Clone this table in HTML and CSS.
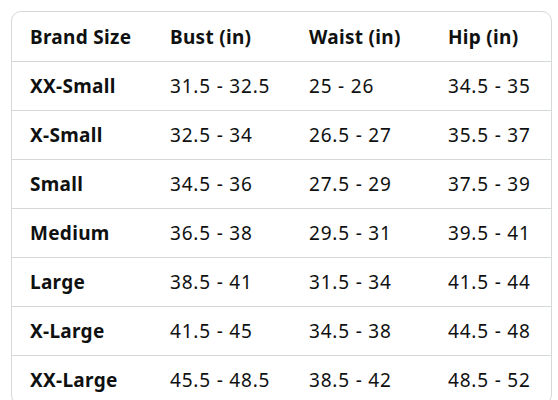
FILE: index.html
```html
<!DOCTYPE html>
<html>
<head>
<meta charset="utf-8">
<link rel="stylesheet" href="styles.css">
</head>
<body>
<div class="card">
  <div class="row head">
    <div class="cell">Brand Size</div><div class="cell">Bust (in)</div><div class="cell">Waist (in)</div><div class="cell">Hip (in)</div>
  </div>
  <div class="row"><div class="cell b">XX-Small</div><div class="cell">31.5 - 32.5</div><div class="cell">25 - 26</div><div class="cell">34.5 - 35</div></div>
  <div class="row"><div class="cell b">X-Small</div><div class="cell">32.5 - 34</div><div class="cell">26.5 - 27</div><div class="cell">35.5 - 37</div></div>
  <div class="row"><div class="cell b">Small</div><div class="cell">34.5 - 36</div><div class="cell">27.5 - 29</div><div class="cell">37.5 - 39</div></div>
  <div class="row"><div class="cell b">Medium</div><div class="cell">36.5 - 38</div><div class="cell">29.5 - 31</div><div class="cell">39.5 - 41</div></div>
  <div class="row"><div class="cell b">Large</div><div class="cell">38.5 - 41</div><div class="cell">31.5 - 34</div><div class="cell">41.5 - 44</div></div>
  <div class="row"><div class="cell b">X-Large</div><div class="cell">41.5 - 45</div><div class="cell">34.5 - 38</div><div class="cell">44.5 - 48</div></div>
  <div class="row"><div class="cell b">XX-Large</div><div class="cell">45.5 - 48.5</div><div class="cell">38.5 - 42</div><div class="cell">48.5 - 52</div></div>
</div>
</body>
</html>
```
FILE: styles.css
```css
html, body { margin: 0; padding: 0; background: #fff; }
body {
  padding: 11px 6px 0 11px;
  font-family: "Noto Sans", "Open Sans", sans-serif;
  font-size: 19px;
  color: #0f1111;
}
.card {
  width: 539px;
  border: 1px solid #d5d9d9;
  border-radius: 10px;
  overflow: hidden;
}
.row {
  display: grid;
  grid-template-columns: 140px 139px 139px 1fr;
  height: 48px;
  border-top: 1px solid #d5d9d9;
}
.row.head { border-top: 0; height: 49px; }
.cell {
  display: flex;
  align-items: center;
  padding-left: 18px;
  white-space: nowrap;
  letter-spacing: 0.8px;
}
.head .cell, .cell.b { font-weight: 700; letter-spacing: 0.3px; }
```
